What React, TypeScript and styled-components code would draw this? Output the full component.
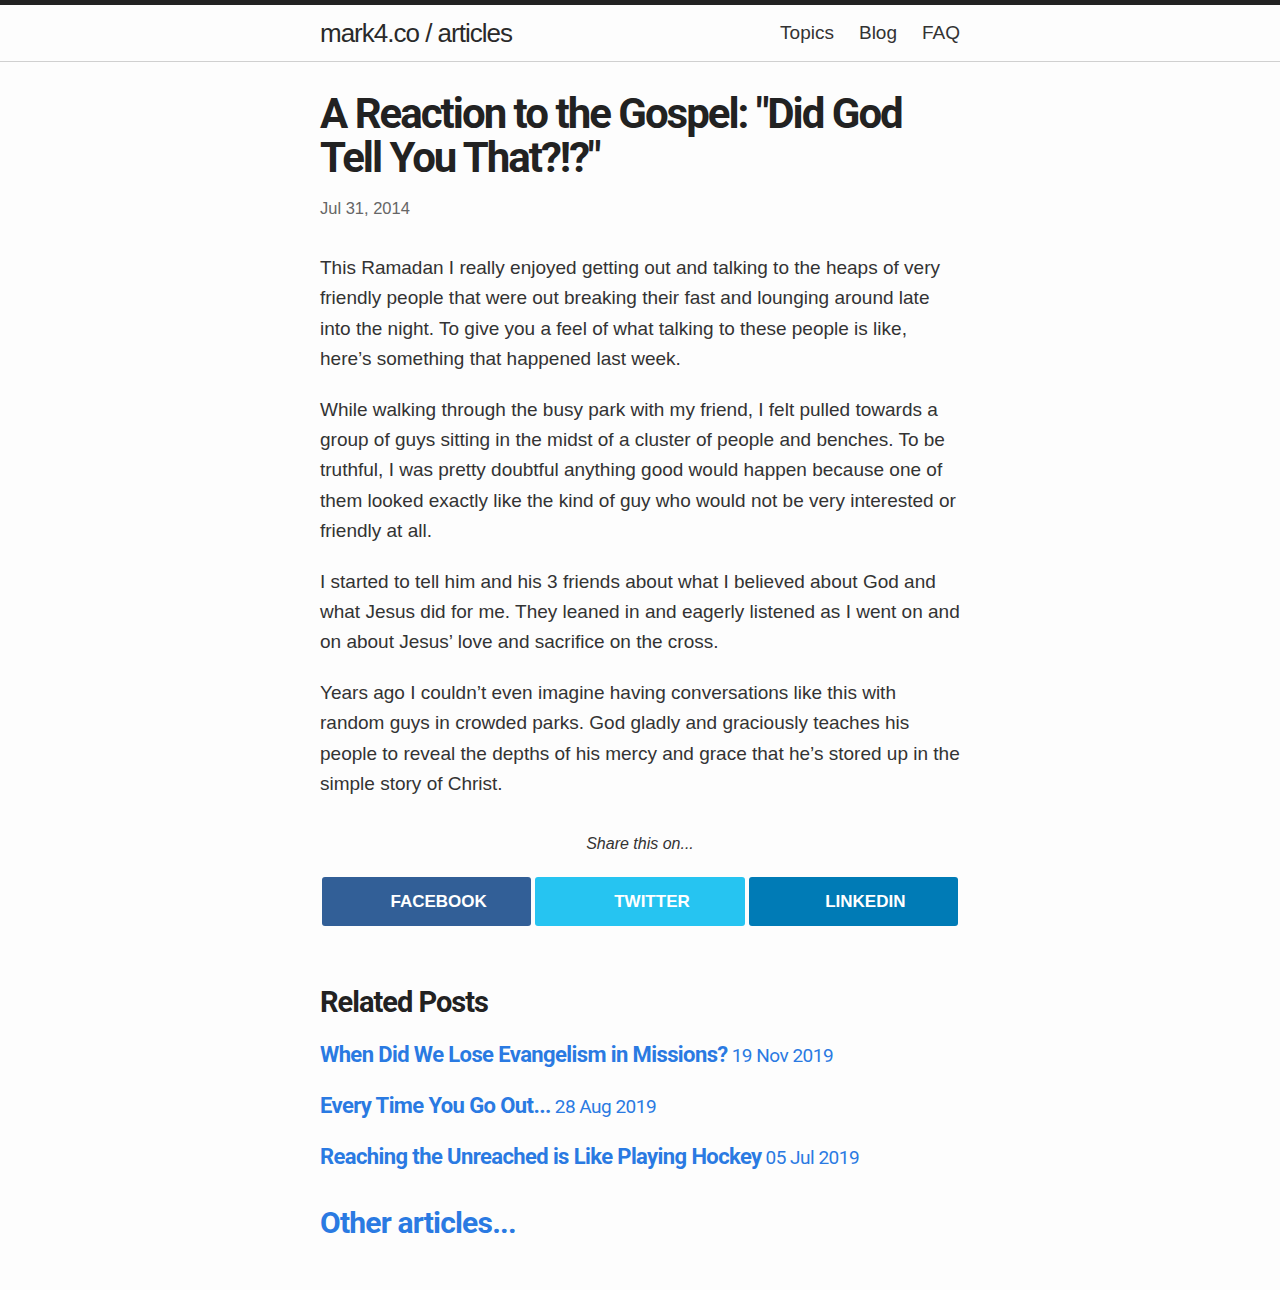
import React from "react";
import styled, { createGlobalStyle } from "styled-components";

const Global = createGlobalStyle`
  html, body { margin: 0; padding: 0; background: #fdfdfd; }
  body { font-family: "Liberation Sans", Arial, sans-serif; color: #333; }
`;

const headFont = `"Roboto", "Liberation Sans", sans-serif`;

const TopBar = styled.header`
  border-top: 5px solid #222;
  border-bottom: 1px solid #d0d0d0;
  height: 56px;
`;

const Wrap = styled.div`
  width: 640px;
  margin: 0 auto;
`;

const HeaderInner = styled(Wrap)`
  display: flex;
  align-items: center;
  justify-content: space-between;
  height: 56px;
`;

const SiteTitle = styled.a`
  font-size: 26px;
  letter-spacing: -1px;
  color: #2a2a2a;
  text-decoration: none;
`;

const Nav = styled.nav`
  display: flex;
  gap: 25px;
`;

const NavLink = styled.a`
  font-size: 19px;
  color: #333;
  text-decoration: none;
`;

const Main = styled(Wrap)`
  padding: 30px 0 40px;
`;

const Title = styled.h1`
  font-family: ${headFont};
  font-weight: 700;
  font-size: 42px;
  line-height: 44px;
  letter-spacing: -2px;
  color: #222;
  margin: 0 0 19px;
`;

const DateLine = styled.p`
  font-size: 16.5px;
  color: #666;
  margin: 0 0 35px;
`;

const Para = styled.p`
  font-size: 19px;
  line-height: 30.4px;
  color: #333;
  margin: 0 0 20px;
`;

const ShareLabel = styled.p`
  font-size: 16px;
  font-style: italic;
  text-align: center;
  color: #333;
  margin: 35px 0 24px;
`;

const ShareRow = styled.div`
  display: flex;
`;

const ShareButton = styled.a<{ $bg: string }>`
  flex: 1;
  margin: 0 2px;
  height: 49px;
  padding-top: 2px;
  box-sizing: border-box;
  border-radius: 3px;
  background: ${(p) => p.$bg};
  color: #fff;
  font-weight: 700;
  font-size: 17px;
  text-transform: uppercase;
  display: flex;
  align-items: center;
  justify-content: center;
  padding-left: 24px;
  text-decoration: none;
`;

const RelatedTitle = styled.h2`
  font-family: ${headFont};
  font-weight: 700;
  font-size: 29px;
  letter-spacing: -1px;
  color: #222;
  margin: 59px 0 20px;
`;

const RelatedList = styled.ul`
  list-style: none;
  margin: 0;
  padding: 0;
  display: flex;
  flex-direction: column;
  gap: 18px;
`;

const RelatedItem = styled.li`
  font-family: ${headFont};
  color: #2a7ae2;
  line-height: 31px;
`;

const RelatedLink = styled.a`
  font-weight: 700;
  font-size: 22px;
  letter-spacing: -0.6px;
  color: #2a7ae2;
  text-decoration: none;
`;

const RelatedDate = styled.span`
  font-size: 19px;
  letter-spacing: -0.5px;
`;

const Other = styled.a`
  display: block;
  font-family: ${headFont};
  font-weight: 700;
  font-size: 30px;
  letter-spacing: -0.8px;
  color: #2a7ae2;
  text-decoration: none;
  margin-top: 31px;
`;

const paragraphs = [
  "This Ramadan I really enjoyed getting out and talking to the heaps of very friendly people that were out breaking their fast and lounging around late into the night. To give you a feel of what talking to these people is like, here\u2019s something that happened last week.",
  "While walking through the busy park with my friend, I felt pulled towards a group of guys sitting in the midst of a cluster of people and benches. To be truthful, I was pretty doubtful anything good would happen because one of them looked exactly like the kind of guy who would not be very interested or friendly at all.",
  "I started to tell him and his 3 friends about what I believed about God and what Jesus did for me. They leaned in and eagerly listened as I went on and on about Jesus\u2019 love and sacrifice on the cross.",
  "Years ago I couldn\u2019t even imagine having conversations like this with random guys in crowded parks. God gladly and graciously teaches his people to reveal the depths of his mercy and grace that he\u2019s stored up in the simple story of Christ.",
];

const related = [
  { title: "When Did We Lose Evangelism in Missions?", date: "19 Nov 2019" },
  { title: "Every Time You Go Out...", date: "28 Aug 2019" },
  { title: "Reaching the Unreached is Like Playing Hockey", date: "05 Jul 2019" },
];

export default function App() {
  return (
    <>
      <Global />
      <TopBar>
        <HeaderInner>
          <SiteTitle href="#">mark4.co / articles</SiteTitle>
          <Nav>
            <NavLink href="#">Topics</NavLink>
            <NavLink href="#">Blog</NavLink>
            <NavLink href="#">FAQ</NavLink>
          </Nav>
        </HeaderInner>
      </TopBar>
      <Main>
        <Title>A Reaction to the Gospel: "Did God Tell You That?!?"</Title>
        <DateLine>Jul 31, 2014</DateLine>
        {paragraphs.map((p, i) => (
          <Para key={i}>{p}</Para>
        ))}
        <ShareLabel>Share this on...</ShareLabel>
        <ShareRow>
          <ShareButton href="#" $bg="#325f97">Facebook</ShareButton>
          <ShareButton href="#" $bg="#26c4f1">Twitter</ShareButton>
          <ShareButton href="#" $bg="#007bb6">LinkedIn</ShareButton>
        </ShareRow>
        <RelatedTitle>Related Posts</RelatedTitle>
        <RelatedList>
          {related.map((r) => (
            <RelatedItem key={r.title}>
              <RelatedLink href="#">{r.title}</RelatedLink> <RelatedDate>{r.date}</RelatedDate>
            </RelatedItem>
          ))}
        </RelatedList>
        <Other href="#">Other articles...</Other>
      </Main>
    </>
  );
}
